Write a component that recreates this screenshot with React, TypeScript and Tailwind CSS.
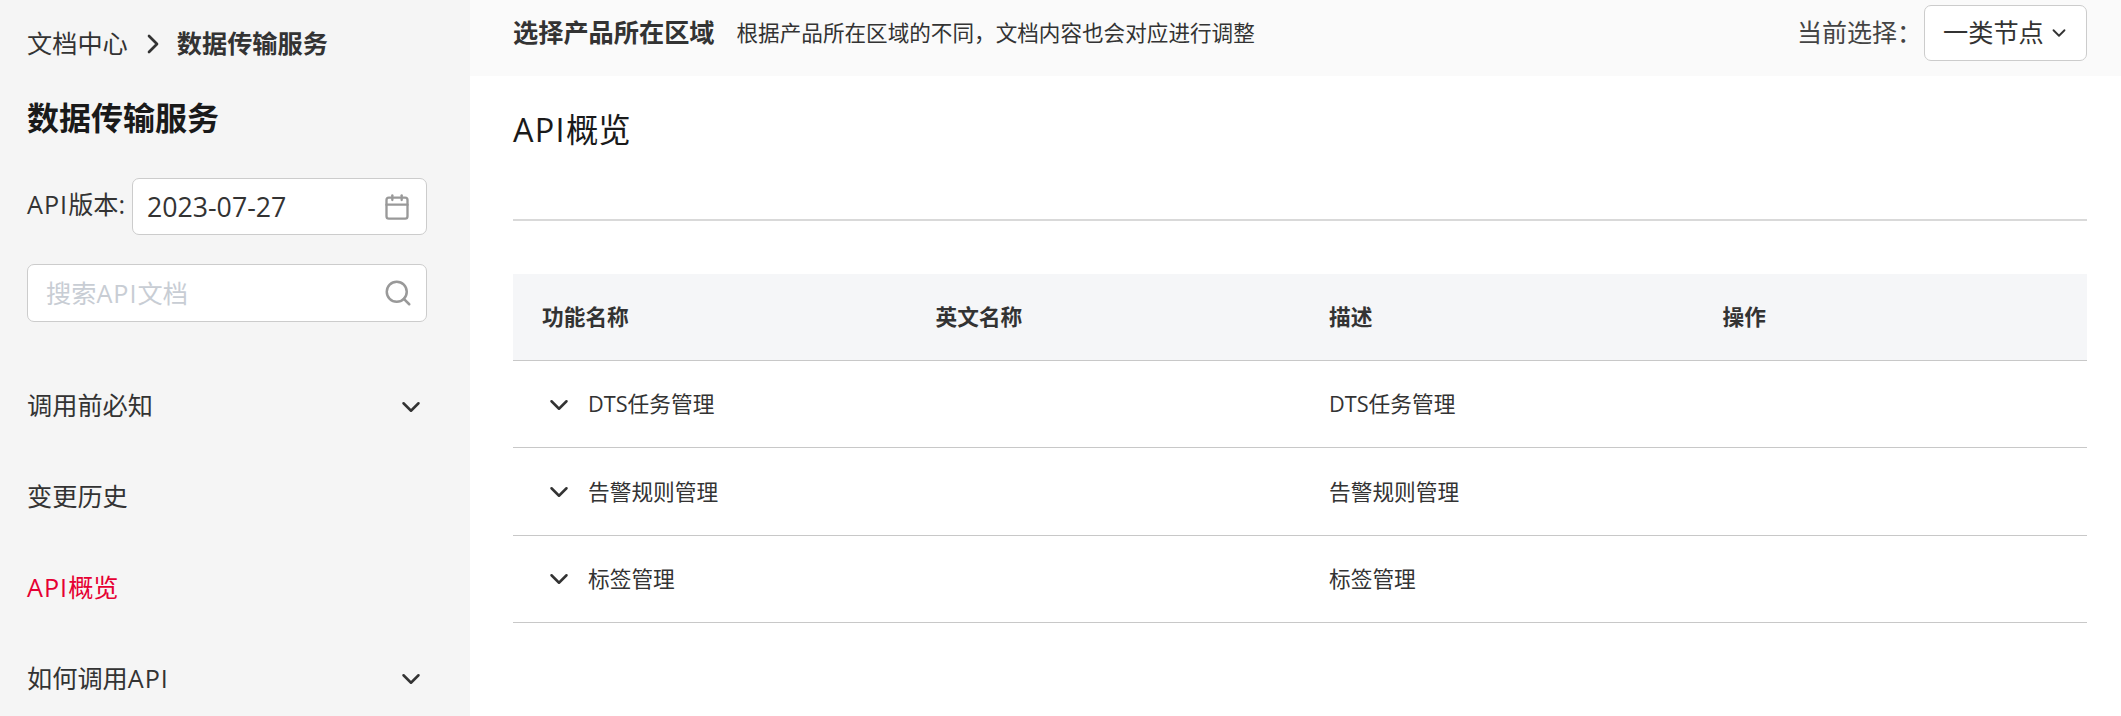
import { Calendar, ChevronDown, ChevronRight, Search } from 'lucide-react';

const font = 'font-["Open_Sans","Noto_Sans_CJK_SC",sans-serif]';

const Api = () => <span className="tracking-[0.04em]">API</span>;

const menu = [
    { key: 'before', label: <>调用前必知</>, arrow: true },
    { key: 'history', label: <>变更历史</> },
    { key: 'overview', label: <><Api />概览</>, active: true },
    { key: 'howto', label: <>如何调用<Api /></>, arrow: true },
];

const rows = ['DTS任务管理', '告警规则管理', '标签管理'];
const heads = ['功能名称', '英文名称', '描述', '操作'];

const Sidebar = () => (
    <aside className="w-[470px] h-[716px] shrink-0 overflow-hidden bg-[#f5f5f5] pl-[27px] pr-[43px]">
        <div className="flex items-center h-[88px] text-[25.2px] text-[#333]">
            <span>文档中心</span>
            <ChevronRight className="w-[32px] h-[32px] ml-[9px] mr-[8px] text-[#333]" strokeWidth={2} />
            <span className="font-bold">数据传输服务</span>
        </div>
        <h2 className="h-[60px] flex items-center text-[32px] leading-none font-bold text-[#1a1a1a]">数据传输服务</h2>
        <div className="mt-[30px] flex items-center justify-between">
            <span className="text-[25.2px] text-[#333] mb-[4px]"><Api />版本:</span>
            <div className="w-[295px] h-[57px] flex items-center justify-between pl-[14px] pr-[15px] bg-white border border-[#ccc] rounded-[7px]">
                <span className="text-[26.7px] mt-[1px] text-[#333]">2023-07-27</span>
                <Calendar className="w-[28px] h-[28px] text-[#999]" strokeWidth={2} />
            </div>
        </div>
        <div className="mt-[29px] h-[58px] flex items-center justify-between pl-[18px] pr-[13px] bg-white border border-[#ccc] rounded-[7px]">
            <span className="text-[25.2px] mt-[1px] text-[#c8cdd4]">搜索<Api />文档</span>
            <Search className="w-[30px] h-[30px] text-[#999]" strokeWidth={2} />
        </div>
        <nav className="mt-[39px]">
            {menu.map((m) => (
                <div key={m.key} className={`h-[90.7px] flex items-center justify-between text-[25.2px] ${m.active ? 'text-[#e60033]' : 'text-[#333]'}`}>
                    <span>{m.label}</span>
                    {m.arrow && <ChevronDown className="w-[30px] h-[30px] mr-[1px] mt-[2px]" strokeWidth={2} />}
                </div>
            ))}
        </nav>
    </aside>
);

const App = () => {
    return (
        <div className={`flex w-[2121px] h-[716px] overflow-hidden bg-white ${font}`}>
            <Sidebar />
            <main className="flex-1 min-w-0">
                <div className="h-[76px] bg-[#fafafa] flex items-center pl-[43px] pr-[34px] pb-[10px]">
                    <span className="text-[25.2px] font-bold text-[#333]">选择产品所在区域</span>
                    <span className="ml-[22px] text-[21.6px] text-[#333]">根据产品所在区域的不同，文档内容也会对应进行调整</span>
                    <span className="ml-auto mr-[2px] text-[25px] text-[#444]">当前选择：</span>
                    <div className="w-[163px] h-[56px] flex items-center pl-[18px] gap-[4px] bg-white border border-[#ccc] rounded-[7px] text-[25.2px] text-[#333]">
                        一类节点
                        <ChevronDown className="w-[22px] h-[22px]" strokeWidth={2} />
                    </div>
                </div>
                <div className="pl-[43px] pr-[34px]">
                    <h1 className="h-[145px] pt-[31px] border-b-2 border-[#d9d9d9] text-[32.4px] leading-[44px] text-[#1a1a1a]"><Api />概览</h1>
                    <div className="mt-[53px]">
                        <div className="grid grid-cols-4 h-[87px] items-center bg-[#f5f6f8] border-b border-[#c8c8c8]">
                            {heads.map((h) => (
                                <span key={h} className="pl-[29px] text-[21.7px] font-bold text-[#333]">{h}</span>
                            ))}
                        </div>
                        {rows.map((r) => (
                            <div key={r} className="grid grid-cols-4 h-[87.3px] items-center border-b border-[#c8c8c8] text-[21.7px] text-[#333]">
                                <div className="flex items-center pl-[31px]">
                                    <ChevronDown className="w-[30px] h-[30px] mr-[14px] mt-[1px]" strokeWidth={2} />
                                    <span className="mt-[1px]">{r}</span>
                                </div>
                                <span />
                                <span className="pl-[29px] mt-[1px]">{r}</span>
                                <span />
                            </div>
                        ))}
                    </div>
                </div>
            </main>
        </div>
    );
};

export default App;
